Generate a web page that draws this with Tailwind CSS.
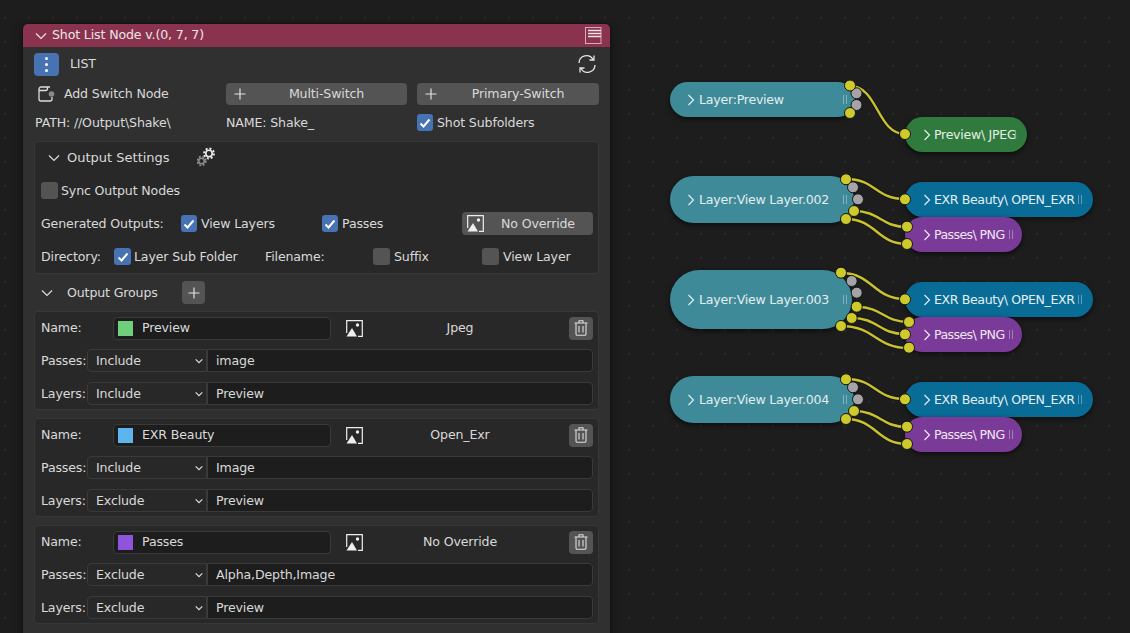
<!DOCTYPE html>
<html>
<head>
<meta charset="utf-8">
<script src="https://cdn.jsdelivr.net/npm/@tailwindcss/browser@4"></script>
</head>
<body class="m-0">
<div class="relative w-[1130px] h-[633px] overflow-hidden bg-[#1d1d1d] bg-[radial-gradient(circle,#272727_1.2px,transparent_1.8px)] bg-[length:24px_24px] bg-[position:-7px_6px] font-['DejaVu_Sans',sans-serif] text-[12.6px] leading-[19.5px] tracking-[-0.15px] text-[#d9d9d9]">

  <!-- Node panel -->
  <div class="absolute left-[23px] top-[24px] w-[587px] h-[640px] rounded-t-[5px] bg-[#303030] shadow-[0_0_0_1px_#141414,0_3px_8px_rgba(0,0,0,0.5)]">
    <div class="h-[23px] flex items-center bg-[#89334f] rounded-t-[5px] pl-[12px] pr-[8px]">
      <svg class="w-[12px] h-[12px] mr-[5px]" viewBox="0 0 12 12" fill="none" stroke="#eadfe3" stroke-width="1.2"><path d="M1 3.5 L6 8.5 L11 3.5"/></svg>
      <span class="text-[#eee4e7] -mt-[1px]">Shot List Node v.(0, 7, 7)</span>
      <svg class="ml-auto w-[17px] h-[18px]" viewBox="0 0 17 18" fill="none"><rect x="0.5" y="0.5" width="15.5" height="16" stroke="#dca8b8"/><path d="M3 3.5H16M3 6.5H16M3 9.5H16" stroke="#f0dfe4" stroke-width="1.4"/></svg>
    </div>
    <div class="pl-[11px] pr-[11px] pt-[6px]">
      <!-- LIST -->
      <div class="flex items-center h-[22px]">
        <div class="w-[25px] h-[23px] rounded-[4px] bg-[#4772b3] flex flex-col items-center justify-center gap-[3px]">
          <span class="w-[3px] h-[3px] bg-white rounded-full"></span><span class="w-[3px] h-[3px] bg-white rounded-full"></span><span class="w-[3px] h-[3px] bg-white rounded-full"></span>
        </div>
        <span class="ml-[11px]">LIST</span>
        <svg class="ml-auto mr-[2px] w-[20px] h-[20px]" viewBox="0 0 20 20" fill="none" stroke="#e4e4e4" stroke-width="1.3"><path d="M2 9 A7.5 7.5 0 0 1 16 5.5 M17 1.5 V6 H12.5"/><path d="M18 11 A7.5 7.5 0 0 1 4 14.5 M3 18.5 V14 H7.5"/></svg>
      </div>
      <!-- Add switch -->
      <div class="flex items-center h-[22px] mt-[8px]">
        <div class="w-[192px] flex items-center">
          <svg class="ml-[3px] w-[18px] h-[18px]" viewBox="0 0 18 18" fill="none"><path d="M13 2H4a2 2 0 0 0-2 2v10a2 2 0 0 0 2 2h9a2 2 0 0 0 2-2v-2M2 5.5h6.5a2 2 0 0 0 2-2V2" stroke="#dedede" stroke-width="1.3"/><circle cx="14.5" cy="9" r="2.8" fill="#8a8a8a"/></svg>
          <span class="ml-[9px]">Add Switch Node</span>
        </div>
        <div class="w-[181px] h-[22px] rounded-[4px] bg-[#545454] relative flex items-center justify-center pl-[20px]">
          <svg class="absolute left-[8px] top-[5px] w-[12px] h-[12px]" viewBox="0 0 12 12" stroke="#e2e2e2" stroke-width="1.2"><path d="M6 0.5V11.5M0.5 6H11.5"/></svg>
          <span>Multi-Switch</span>
        </div>
        <div class="ml-[10px] w-[182px] h-[22px] rounded-[4px] bg-[#545454] relative flex items-center justify-center pl-[20px]">
          <svg class="absolute left-[8px] top-[5px] w-[12px] h-[12px]" viewBox="0 0 12 12" stroke="#e2e2e2" stroke-width="1.2"><path d="M6 0.5V11.5M0.5 6H11.5"/></svg>
          <span>Primary-Switch</span>
        </div>
      </div>
      <!-- Path -->
      <div class="flex items-center h-[25px] mt-[5px]">
        <span class="w-[192px] pl-[1px]">PATH: //Output\Shake\</span>
        <span class="w-[191px]">NAME: Shake_</span>
        <span class="w-[16px] h-[17px] rounded-[3px] bg-[#4772b3] flex items-center justify-center"><svg class="w-[12px] h-[12px]" viewBox="0 0 12 12" fill="none" stroke="#fff" stroke-width="2"><path d="M1.5 6.5L4.5 9.5L10.5 2.5"/></svg></span>
        <span class="ml-[4px]">Shot Subfolders</span>
      </div>
      <!-- Output settings -->
      <div class="mt-[6px] h-[133px] rounded-[4px] bg-[#282828] border border-[#373737] pl-[6px] pr-[5px]">
        <div class="flex items-center h-[32px]">
          <svg class="ml-[7px] w-[12px] h-[12px]" viewBox="0 0 12 12" fill="none" stroke="#dcdcdc" stroke-width="1.2"><path d="M1 3.5 L6 8.5 L11 3.5"/></svg>
          <span class="ml-[7px] text-[13px] tracking-normal">Output Settings</span>
          <svg class="ml-[27px] -mt-[2px] w-[18px] h-[20px]" viewBox="0 0 18 20" fill="none"><circle cx="12" cy="6.5" r="3.2" stroke="#efefef" stroke-width="1.6"/><circle cx="12" cy="6.5" r="5" stroke="#efefef" stroke-width="1.8" stroke-dasharray="2 1.9"/><circle cx="4.5" cy="14" r="2.8" stroke="#8d8d8d" stroke-width="1.6"/><circle cx="4.5" cy="14" r="4.4" stroke="#8d8d8d" stroke-width="1.6" stroke-dasharray="2 1.5"/></svg>
        </div>
        <div class="flex items-center h-[33px]">
          <span class="w-[17px] h-[17px] rounded-[3px] bg-[#545454]"></span>
          <span class="ml-[3px]">Sync Output Nodes</span>
        </div>
        <div class="flex items-center h-[33px]">
          <span class="w-[140px]">Generated Outputs:</span>
          <span class="w-[16px] h-[17px] rounded-[3px] bg-[#4772b3] flex items-center justify-center"><svg class="w-[12px] h-[12px]" viewBox="0 0 12 12" fill="none" stroke="#fff" stroke-width="2"><path d="M1.5 6.5L4.5 9.5L10.5 2.5"/></svg></span>
          <span class="ml-[4px] w-[121px]">View Layers</span>
          <span class="w-[16px] h-[17px] rounded-[3px] bg-[#4772b3] flex items-center justify-center"><svg class="w-[12px] h-[12px]" viewBox="0 0 12 12" fill="none" stroke="#fff" stroke-width="2"><path d="M1.5 6.5L4.5 9.5L10.5 2.5"/></svg></span>
          <span class="ml-[4px] w-[120px]">Passes</span>
          <div class="w-[131px] h-[23px] rounded-[4px] bg-[#545454] flex items-center pl-[5px]">
            <svg class="w-[17px] h-[17px]" viewBox="0 0 17 17" fill="none"><path d="M4 0.7H16.3V16.3H12M0.7 13V0.7H4" stroke="#eee" stroke-width="1.2"/><path d="M0.5 16.5L6 8L11 16.5Z" fill="#eee"/><circle cx="11.5" cy="5" r="1.7" fill="#eee"/></svg>
            <span class="ml-[17px]">No Override</span>
          </div>
        </div>
        <div class="flex items-center h-[33px]">
          <span class="w-[73px]">Directory:</span>
          <span class="w-[17px] h-[17px] rounded-[3px] bg-[#4772b3] flex items-center justify-center"><svg class="w-[12px] h-[12px]" viewBox="0 0 12 12" fill="none" stroke="#fff" stroke-width="2"><path d="M1.5 6.5L4.5 9.5L10.5 2.5"/></svg></span>
          <span class="ml-[3px] w-[131px]">Layer Sub Folder</span>
          <span class="w-[108px]">Filename:</span>
          <span class="w-[17px] h-[17px] rounded-[3px] bg-[#545454]"></span>
          <span class="ml-[4px] w-[88px]">Suffix</span>
          <span class="w-[17px] h-[17px] rounded-[3px] bg-[#545454]"></span>
          <span class="ml-[4px]">View Layer</span>
        </div>
      </div>
      <!-- Output groups -->
      <div class="flex items-center h-[37px]">
        <svg class="ml-[7px] w-[12px] h-[12px]" viewBox="0 0 12 12" fill="none" stroke="#dcdcdc" stroke-width="1.2"><path d="M1 3.5 L6 8.5 L11 3.5"/></svg>
        <span class="ml-[14px] w-[115px]">Output Groups</span>
        <div class="w-[23px] h-[23px] rounded-[4px] bg-[#545454] flex items-center justify-center"><svg class="w-[12px] h-[12px]" viewBox="0 0 12 12" stroke="#e2e2e2" stroke-width="1.2"><path d="M6 0.5V11.5M0.5 6H11.5"/></svg></div>
      </div>
      <!-- Groups -->
      <div class="flex flex-col gap-[8px]">
        <!-- Group 1 -->
        <div class="h-[99px] rounded-[4px] bg-[#282828] border border-[#373737] pl-[6px] pr-[5px]">
          <div class="flex items-center h-[32px]">
            <span class="w-[72px]">Name:</span>
            <div class="w-[218px] h-[23px] rounded-[4px] bg-[#1d1d1d] border border-[#3a3a3a] flex items-center pl-[4px]"><span class="w-[15px] h-[15px] bg-[#70cf7b]"></span><span class="ml-[9px]">Preview</span></div>
            <svg class="ml-[15px] w-[17px] h-[17px]" viewBox="0 0 17 17" fill="none"><path d="M4 0.7H16.3V16.3H12M0.7 13V0.7H4" stroke="#eee" stroke-width="1.2"/><path d="M0.5 16.5L6 8L11 16.5Z" fill="#eee"/><circle cx="11.5" cy="5" r="1.7" fill="#eee"/></svg>
            <span class="w-[206px] pr-[12px] text-center">Jpeg</span>
            <div class="w-[24px] h-[23px] rounded-[4px] bg-[#545454] flex items-center justify-center"><svg class="w-[14px] h-[16px]" viewBox="0 0 14 16" fill="none" stroke="#dedede" stroke-width="1.1"><path d="M0.5 3H13.5M5 3V0.8H9V3M2 3V14a1.3 1.3 0 0 0 1.3 1.3H10.7A1.3 1.3 0 0 0 12 14V3M5 6V12.5M9 6V12.5"/></svg></div>
          </div>
          <div class="flex items-center h-[33px]">
            <span class="w-[46px]">Passes:</span>
            <div class="w-[120px] h-[23px] rounded-l-[4px] bg-[#282828] border border-[#3a3a3a] flex items-center pl-[8px] pr-[3px]"><span>Include</span><svg class="ml-auto w-[8px] h-[8px]" viewBox="0 0 8 8" fill="none" stroke="#dcdcdc" stroke-width="1.2"><path d="M0.7 2.3L4 5.6L7.3 2.3"/></svg></div>
            <div class="flex-1 h-[23px] rounded-r-[4px] bg-[#1d1d1d] border border-[#3a3a3a] flex items-center pl-[8px]">image</div>
          </div>
          <div class="flex items-center h-[33px]">
            <span class="w-[46px]">Layers:</span>
            <div class="w-[120px] h-[23px] rounded-l-[4px] bg-[#282828] border border-[#3a3a3a] flex items-center pl-[8px] pr-[3px]"><span>Include</span><svg class="ml-auto w-[8px] h-[8px]" viewBox="0 0 8 8" fill="none" stroke="#dcdcdc" stroke-width="1.2"><path d="M0.7 2.3L4 5.6L7.3 2.3"/></svg></div>
            <div class="flex-1 h-[23px] rounded-r-[4px] bg-[#1d1d1d] border border-[#3a3a3a] flex items-center pl-[8px]">Preview</div>
          </div>
        </div>
        <!-- Group 2 -->
        <div class="h-[99px] rounded-[4px] bg-[#282828] border border-[#373737] pl-[6px] pr-[5px]">
          <div class="flex items-center h-[32px]">
            <span class="w-[72px]">Name:</span>
            <div class="w-[218px] h-[23px] rounded-[4px] bg-[#1d1d1d] border border-[#3a3a3a] flex items-center pl-[4px]"><span class="w-[15px] h-[15px] bg-[#5eb4ec]"></span><span class="ml-[9px]">EXR Beauty</span></div>
            <svg class="ml-[15px] w-[17px] h-[17px]" viewBox="0 0 17 17" fill="none"><path d="M4 0.7H16.3V16.3H12M0.7 13V0.7H4" stroke="#eee" stroke-width="1.2"/><path d="M0.5 16.5L6 8L11 16.5Z" fill="#eee"/><circle cx="11.5" cy="5" r="1.7" fill="#eee"/></svg>
            <span class="w-[206px] pr-[12px] text-center">Open_Exr</span>
            <div class="w-[24px] h-[23px] rounded-[4px] bg-[#545454] flex items-center justify-center"><svg class="w-[14px] h-[16px]" viewBox="0 0 14 16" fill="none" stroke="#dedede" stroke-width="1.1"><path d="M0.5 3H13.5M5 3V0.8H9V3M2 3V14a1.3 1.3 0 0 0 1.3 1.3H10.7A1.3 1.3 0 0 0 12 14V3M5 6V12.5M9 6V12.5"/></svg></div>
          </div>
          <div class="flex items-center h-[33px]">
            <span class="w-[46px]">Passes:</span>
            <div class="w-[120px] h-[23px] rounded-l-[4px] bg-[#282828] border border-[#3a3a3a] flex items-center pl-[8px] pr-[3px]"><span>Include</span><svg class="ml-auto w-[8px] h-[8px]" viewBox="0 0 8 8" fill="none" stroke="#dcdcdc" stroke-width="1.2"><path d="M0.7 2.3L4 5.6L7.3 2.3"/></svg></div>
            <div class="flex-1 h-[23px] rounded-r-[4px] bg-[#1d1d1d] border border-[#3a3a3a] flex items-center pl-[8px]">Image</div>
          </div>
          <div class="flex items-center h-[33px]">
            <span class="w-[46px]">Layers:</span>
            <div class="w-[120px] h-[23px] rounded-l-[4px] bg-[#282828] border border-[#3a3a3a] flex items-center pl-[8px] pr-[3px]"><span>Exclude</span><svg class="ml-auto w-[8px] h-[8px]" viewBox="0 0 8 8" fill="none" stroke="#dcdcdc" stroke-width="1.2"><path d="M0.7 2.3L4 5.6L7.3 2.3"/></svg></div>
            <div class="flex-1 h-[23px] rounded-r-[4px] bg-[#1d1d1d] border border-[#3a3a3a] flex items-center pl-[8px]">Preview</div>
          </div>
        </div>
        <!-- Group 3 -->
        <div class="h-[99px] rounded-[4px] bg-[#282828] border border-[#373737] pl-[6px] pr-[5px]">
          <div class="flex items-center h-[32px]">
            <span class="w-[72px]">Name:</span>
            <div class="w-[218px] h-[23px] rounded-[4px] bg-[#1d1d1d] border border-[#3a3a3a] flex items-center pl-[4px]"><span class="w-[15px] h-[15px] bg-[#8e55dc]"></span><span class="ml-[9px]">Passes</span></div>
            <svg class="ml-[15px] w-[17px] h-[17px]" viewBox="0 0 17 17" fill="none"><path d="M4 0.7H16.3V16.3H12M0.7 13V0.7H4" stroke="#eee" stroke-width="1.2"/><path d="M0.5 16.5L6 8L11 16.5Z" fill="#eee"/><circle cx="11.5" cy="5" r="1.7" fill="#eee"/></svg>
            <span class="w-[206px] pr-[12px] text-center">No Override</span>
            <div class="w-[24px] h-[23px] rounded-[4px] bg-[#545454] flex items-center justify-center"><svg class="w-[14px] h-[16px]" viewBox="0 0 14 16" fill="none" stroke="#dedede" stroke-width="1.1"><path d="M0.5 3H13.5M5 3V0.8H9V3M2 3V14a1.3 1.3 0 0 0 1.3 1.3H10.7A1.3 1.3 0 0 0 12 14V3M5 6V12.5M9 6V12.5"/></svg></div>
          </div>
          <div class="flex items-center h-[33px]">
            <span class="w-[46px]">Passes:</span>
            <div class="w-[120px] h-[23px] rounded-l-[4px] bg-[#282828] border border-[#3a3a3a] flex items-center pl-[8px] pr-[3px]"><span>Exclude</span><svg class="ml-auto w-[8px] h-[8px]" viewBox="0 0 8 8" fill="none" stroke="#dcdcdc" stroke-width="1.2"><path d="M0.7 2.3L4 5.6L7.3 2.3"/></svg></div>
            <div class="flex-1 h-[23px] rounded-r-[4px] bg-[#1d1d1d] border border-[#3a3a3a] flex items-center pl-[8px]">Alpha,Depth,Image</div>
          </div>
          <div class="flex items-center h-[33px]">
            <span class="w-[46px]">Layers:</span>
            <div class="w-[120px] h-[23px] rounded-l-[4px] bg-[#282828] border border-[#3a3a3a] flex items-center pl-[8px] pr-[3px]"><span>Exclude</span><svg class="ml-auto w-[8px] h-[8px]" viewBox="0 0 8 8" fill="none" stroke="#dcdcdc" stroke-width="1.2"><path d="M0.7 2.3L4 5.6L7.3 2.3"/></svg></div>
            <div class="flex-1 h-[23px] rounded-r-[4px] bg-[#1d1d1d] border border-[#3a3a3a] flex items-center pl-[8px]">Preview</div>
          </div>
        </div>
      </div>
    </div>
  </div>

  <!-- Wires -->
  <svg class="absolute left-0 top-0" width="1130" height="633" fill="none">
    <g stroke="#141414" stroke-width="4.4" opacity="0.6">
      <path d="M850 86C878 86 877 134 905 134"/><path d="M846 179C876 179 875 199 905 199"/><path d="M854 211C880 211 881 227 907 227"/><path d="M846 219C876 219 877 244 907 244"/>
      <path d="M841 273C873 273 873 299 905 299"/><path d="M857 307C883 307 883 322 909 322"/><path d="M852 318C878 318 879 334 905 334"/><path d="M841 326C875 326 875 348 909 348"/>
      <path d="M846 379C876 379 875 399 905 399"/><path d="M854 411C880 411 881 427 907 427"/><path d="M846 419C876 419 877 444 907 444"/>
    </g>
    <g stroke="#c9c22e" stroke-width="2.4">
      <path d="M850 86C878 86 877 134 905 134"/><path d="M846 179C876 179 875 199 905 199"/><path d="M854 211C880 211 881 227 907 227"/><path d="M846 219C876 219 877 244 907 244"/>
      <path d="M841 273C873 273 873 299 905 299"/><path d="M857 307C883 307 883 322 909 322"/><path d="M852 318C878 318 879 334 905 334"/><path d="M841 326C875 326 875 348 909 348"/>
      <path d="M846 379C876 379 875 399 905 399"/><path d="M854 411C880 411 881 427 907 427"/><path d="M846 419C876 419 877 444 907 444"/>
    </g>
  </svg>

  <!-- Layer nodes -->
  <div class="absolute left-[670px] top-[82px] w-[185px] h-[35px] rounded-full bg-[#3f8a99] shadow-[0_2px_5px_rgba(0,0,0,0.6)] flex items-center pl-[17px] text-[#e2eeee] tracking-[-0.25px]">
    <svg class="w-[8px] h-[12px]" viewBox="0 0 8 12" fill="none" stroke="#e2eeee" stroke-width="1.2"><path d="M1.5 1L6.5 6L1.5 11"/></svg><span class="ml-[4px]">Layer:Preview</span>
    <span class="absolute left-[173px] top-[13px] w-[4px] h-[9px] border-x border-[#7fb2bd]"></span>
  </div>
  <div class="absolute left-[670px] top-[176px] w-[184px] h-[47px] rounded-full bg-[#3f8a99] shadow-[0_2px_5px_rgba(0,0,0,0.6)] flex items-center pl-[17px] text-[#e2eeee] tracking-[-0.25px]">
    <svg class="w-[8px] h-[12px]" viewBox="0 0 8 12" fill="none" stroke="#e2eeee" stroke-width="1.2"><path d="M1.5 1L6.5 6L1.5 11"/></svg><span class="ml-[4px]">Layer:View Layer.002</span>
    <span class="absolute left-[173px] top-[19px] w-[4px] h-[9px] border-x border-[#7fb2bd]"></span>
  </div>
  <div class="absolute left-[670px] top-[270px] w-[182px] h-[59px] rounded-full bg-[#3f8a99] shadow-[0_2px_5px_rgba(0,0,0,0.6)] flex items-center pl-[17px] text-[#e2eeee] tracking-[-0.25px]">
    <svg class="w-[8px] h-[12px]" viewBox="0 0 8 12" fill="none" stroke="#e2eeee" stroke-width="1.2"><path d="M1.5 1L6.5 6L1.5 11"/></svg><span class="ml-[4px]">Layer:View Layer.003</span>
    <span class="absolute left-[173px] top-[25px] w-[4px] h-[9px] border-x border-[#7fb2bd]"></span>
  </div>
  <div class="absolute left-[670px] top-[376px] w-[184px] h-[47px] rounded-full bg-[#3f8a99] shadow-[0_2px_5px_rgba(0,0,0,0.6)] flex items-center pl-[17px] text-[#e2eeee] tracking-[-0.25px]">
    <svg class="w-[8px] h-[12px]" viewBox="0 0 8 12" fill="none" stroke="#e2eeee" stroke-width="1.2"><path d="M1.5 1L6.5 6L1.5 11"/></svg><span class="ml-[4px]">Layer:View Layer.004</span>
    <span class="absolute left-[173px] top-[19px] w-[4px] h-[9px] border-x border-[#7fb2bd]"></span>
  </div>

  <!-- Output nodes -->
  <div class="absolute left-[905px] top-[117px] w-[122px] h-[35px] rounded-full bg-[#2f7a3c] shadow-[0_2px_5px_rgba(0,0,0,0.6)] flex items-center pl-[18px] text-[#e4efe6] tracking-[-0.3px]">
    <svg class="w-[8px] h-[12px]" viewBox="0 0 8 12" fill="none" stroke="#e4efe6" stroke-width="1.2"><path d="M1.5 1L6.5 6L1.5 11"/></svg><span class="ml-[3px] whitespace-nowrap">Preview\ JPEG</span>
    <span class="absolute left-[110px] top-[13px] w-[2px] h-[9px] border-l border-[#78ab82]"></span>
  </div>
  <div class="absolute left-[905px] top-[182px] w-[188px] h-[35px] rounded-full bg-[#086c96] shadow-[0_2px_5px_rgba(0,0,0,0.6)] flex items-center pl-[18px] text-[#e2eef3] tracking-[-0.4px]">
    <svg class="w-[8px] h-[12px]" viewBox="0 0 8 12" fill="none" stroke="#e2eef3" stroke-width="1.2"><path d="M1.5 1L6.5 6L1.5 11"/></svg><span class="ml-[3px] whitespace-nowrap">EXR Beauty\ OPEN_EXR</span>
    <span class="absolute left-[173px] top-[13px] w-[4px] h-[9px] border-x border-[#5f9fb9]"></span>
  </div>
  <div class="absolute left-[905px] top-[217px] w-[117px] h-[35px] rounded-full bg-[#7a3a98] shadow-[0_2px_5px_rgba(0,0,0,0.6)] flex items-center pl-[18px] text-[#efe5f3] tracking-[-0.6px]">
    <svg class="w-[8px] h-[12px]" viewBox="0 0 8 12" fill="none" stroke="#efe5f3" stroke-width="1.2"><path d="M1.5 1L6.5 6L1.5 11"/></svg><span class="ml-[3px] whitespace-nowrap">Passes\ PNG</span>
    <span class="absolute left-[104px] top-[13px] w-[4px] h-[9px] border-x border-[#a57fba]"></span>
  </div>
  <div class="absolute left-[905px] top-[282px] w-[188px] h-[35px] rounded-full bg-[#086c96] shadow-[0_2px_5px_rgba(0,0,0,0.6)] flex items-center pl-[18px] text-[#e2eef3] tracking-[-0.4px]">
    <svg class="w-[8px] h-[12px]" viewBox="0 0 8 12" fill="none" stroke="#e2eef3" stroke-width="1.2"><path d="M1.5 1L6.5 6L1.5 11"/></svg><span class="ml-[3px] whitespace-nowrap">EXR Beauty\ OPEN_EXR</span>
    <span class="absolute left-[173px] top-[13px] w-[4px] h-[9px] border-x border-[#5f9fb9]"></span>
  </div>
  <div class="absolute left-[905px] top-[317px] w-[117px] h-[35px] rounded-full bg-[#7a3a98] shadow-[0_2px_5px_rgba(0,0,0,0.6)] flex items-center pl-[18px] text-[#efe5f3] tracking-[-0.6px]">
    <svg class="w-[8px] h-[12px]" viewBox="0 0 8 12" fill="none" stroke="#efe5f3" stroke-width="1.2"><path d="M1.5 1L6.5 6L1.5 11"/></svg><span class="ml-[3px] whitespace-nowrap">Passes\ PNG</span>
    <span class="absolute left-[104px] top-[13px] w-[4px] h-[9px] border-x border-[#a57fba]"></span>
  </div>
  <div class="absolute left-[905px] top-[382px] w-[188px] h-[35px] rounded-full bg-[#086c96] shadow-[0_2px_5px_rgba(0,0,0,0.6)] flex items-center pl-[18px] text-[#e2eef3] tracking-[-0.4px]">
    <svg class="w-[8px] h-[12px]" viewBox="0 0 8 12" fill="none" stroke="#e2eef3" stroke-width="1.2"><path d="M1.5 1L6.5 6L1.5 11"/></svg><span class="ml-[3px] whitespace-nowrap">EXR Beauty\ OPEN_EXR</span>
    <span class="absolute left-[173px] top-[13px] w-[4px] h-[9px] border-x border-[#5f9fb9]"></span>
  </div>
  <div class="absolute left-[905px] top-[417px] w-[117px] h-[35px] rounded-full bg-[#7a3a98] shadow-[0_2px_5px_rgba(0,0,0,0.6)] flex items-center pl-[18px] text-[#efe5f3] tracking-[-0.6px]">
    <svg class="w-[8px] h-[12px]" viewBox="0 0 8 12" fill="none" stroke="#efe5f3" stroke-width="1.2"><path d="M1.5 1L6.5 6L1.5 11"/></svg><span class="ml-[3px] whitespace-nowrap">Passes\ PNG</span>
    <span class="absolute left-[104px] top-[13px] w-[4px] h-[9px] border-x border-[#a57fba]"></span>
  </div>

  <!-- Sockets -->
  <svg class="absolute left-0 top-0" width="1130" height="633">
    <g fill="#a6a3a8" stroke="#161616" stroke-width="1">
      <circle cx="856.5" cy="93.3" r="5.5"/><circle cx="856.5" cy="105" r="5.5"/>
      <circle cx="853" cy="187.3" r="5.5"/><circle cx="858" cy="199.3" r="5.5"/>
      <circle cx="851.7" cy="281" r="5.5"/><circle cx="856.7" cy="292.7" r="5.5"/>
      <circle cx="853" cy="387.3" r="5.5"/><circle cx="858" cy="399.3" r="5.5"/>
    </g>
    <g fill="#cfca2c" stroke="#161616" stroke-width="1">
      <circle cx="850" cy="85.5" r="5.5"/><circle cx="850" cy="113" r="5.5"/><circle cx="905" cy="134" r="5.5"/>
      <circle cx="846" cy="179.3" r="5.5"/><circle cx="854" cy="211" r="5.5"/><circle cx="846" cy="219" r="5.5"/>
      <circle cx="905" cy="199.3" r="5.5"/><circle cx="907" cy="226.7" r="5.5"/><circle cx="907" cy="244" r="5.5"/>
      <circle cx="841" cy="272.7" r="5.5"/><circle cx="856.7" cy="306.7" r="5.5"/><circle cx="851.7" cy="318" r="5.5"/><circle cx="841" cy="326" r="5.5"/>
      <circle cx="905" cy="299.3" r="5.5"/><circle cx="909" cy="322" r="5.5"/><circle cx="905" cy="334.3" r="5.5"/><circle cx="909" cy="347.7" r="5.5"/>
      <circle cx="846" cy="379.3" r="5.5"/><circle cx="854" cy="411" r="5.5"/><circle cx="846" cy="419" r="5.5"/>
      <circle cx="905" cy="399.3" r="5.5"/><circle cx="907" cy="426.7" r="5.5"/><circle cx="907" cy="444" r="5.5"/>
    </g>
  </svg>
</div>
</body>
</html>
